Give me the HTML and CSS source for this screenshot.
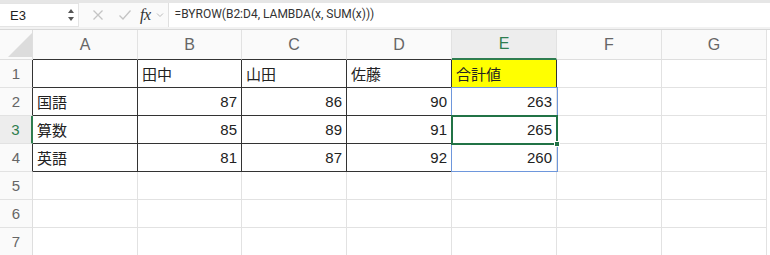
FILE: index.html
```html
<!DOCTYPE html>
<html lang="ja">
<head>
    <meta charset="UTF-8">
    <title>BYROW</title>
    <link rel="stylesheet" href="styles.css">
</head>
<body>
    <div class="formula-bar">
        <div class="name-box">
            <span>E3</span>
            <svg class="spin" width="8" height="14" viewBox="0 0 8 14">
                <polygon points="4,1 7,5 1,5" fill="#555"/>
                <polygon points="1,9 7,9 4,13" fill="#555"/>
            </svg>
        </div>
        <div class="tools">
            <svg width="12" height="12" viewBox="0 0 12 12"><path d="M1.5 1.5 L10.5 10.5 M10.5 1.5 L1.5 10.5" stroke="#c4c4c4" stroke-width="1.3" fill="none"/></svg>
            <svg width="14" height="12" viewBox="0 0 14 12"><path d="M1.5 6.5 L5 10 L12.5 1.5" stroke="#c4c4c4" stroke-width="1.3" fill="none"/></svg>
            <span class="fx">fx</span>
            <svg width="8" height="6" viewBox="0 0 8 6"><path d="M1 1.5 L4 4.5 L7 1.5" stroke="#bbb" stroke-width="1" fill="none"/></svg>
        </div>
        <div class="formula">=BYROW(B2:D4, LAMBDA(x, SUM(x)))</div>
    </div>

    <div class="sheet">
        <div class="corner">
            <svg width="33" height="29" viewBox="0 0 33 29"><polygon points="8,27 32,27 32,3" fill="#dcdcdc"/></svg>
        </div>
        <div class="col-head dark">A</div>
        <div class="col-head dark">B</div>
        <div class="col-head dark">C</div>
        <div class="col-head dark">D</div>
        <div class="col-head active">E</div>
        <div class="col-head">F</div>
        <div class="col-head">G</div>

        <div class="row-head edge">1</div>
        <div class="cell b"></div>
        <div class="cell b">田中</div>
        <div class="cell b">山田</div>
        <div class="cell b">佐藤</div>
        <div class="cell b total">合計値</div>
        <div class="cell"></div>
        <div class="cell"></div>

        <div class="row-head edge">2</div>
        <div class="cell b">国語</div>
        <div class="cell b num">87</div>
        <div class="cell b num">86</div>
        <div class="cell b num">90</div>
        <div class="cell num">263</div>
        <div class="cell"></div>
        <div class="cell"></div>

        <div class="row-head active">3</div>
        <div class="cell b">算数</div>
        <div class="cell b num">85</div>
        <div class="cell b num">89</div>
        <div class="cell b num">91</div>
        <div class="cell num">265</div>
        <div class="cell"></div>
        <div class="cell"></div>

        <div class="row-head edge">4</div>
        <div class="cell b">英語</div>
        <div class="cell b num">81</div>
        <div class="cell b num">87</div>
        <div class="cell b num">92</div>
        <div class="cell num">260</div>
        <div class="cell"></div>
        <div class="cell"></div>

        <div class="row-head">5</div>
        <div class="cell"></div><div class="cell"></div><div class="cell"></div><div class="cell"></div><div class="cell"></div><div class="cell"></div><div class="cell"></div>

        <div class="row-head">6</div>
        <div class="cell"></div><div class="cell"></div><div class="cell"></div><div class="cell"></div><div class="cell"></div><div class="cell"></div><div class="cell"></div>

        <div class="row-head">7</div>
        <div class="cell"></div><div class="cell"></div><div class="cell"></div><div class="cell"></div><div class="cell"></div><div class="cell"></div><div class="cell"></div>

        <!-- spill range and selected cell drawn over the grid -->
        <div class="spill"></div>
        <div class="selection"><span class="handle"></span></div>
    </div>
</body>
</html>
```

FILE: styles.css
```css
* {
    box-sizing: border-box;
}

body {
    margin: 0;
    width: 770px;
    height: 255px;
    overflow: hidden;
    background-color: white;
    font-family: "Liberation Sans", "Noto Sans CJK JP", sans-serif;
    color: #222;
}

.formula-bar {
    height: 30px;
    display: flex;
    align-items: center;
    background-color: #fafafa;
    border-top: 3px solid #e6e6e6;
    border-bottom: 1px solid #d8d8d8;
    box-shadow: 0 -2px 0 #f2f2f2 inset;
    padding-bottom: 2px;
}

.name-box {
    width: 79px;
    height: 24px;
    display: flex;
    align-items: center;
    justify-content: space-between;
    padding: 0 3px 0 10px;
    background-color: white;
    border: 1px solid #e4e4e4;
    border-left: none;
    font-size: 13px;
    color: #222;
}

.tools {
    display: flex;
    align-items: center;
    height: 24px;
    padding-left: 13px;
}

.tools svg:nth-child(1) {
    margin-right: 14px;
}

.tools svg:nth-child(2) {
    margin-right: 8px;
}

.fx {
    font-family: "Liberation Serif", serif;
    font-style: italic;
    font-size: 16px;
    color: #333;
    margin-right: 5px;
    letter-spacing: -0.5px;
}

.formula {
    flex-grow: 1;
    height: 24px;
    margin-left: 4px;
    padding-left: 6px;
    line-height: 23px;
    border-left: 1px solid #e0e0e0;
    background-color: white;
    font-family: Roboto, "Liberation Sans", sans-serif;
    font-size: 12px;
    color: #333;
}

.sheet {
    position: relative;
    display: grid;
    grid-template-columns: 33px 105px 104px 105px 105px 105px 105px 105px;
    grid-template-rows: 30px repeat(7, 28px);
}

.corner {
    background-color: #fafafa;
    border-right: 1px solid #dedede;
    border-bottom: 1px solid #dedede;
}

.corner svg {
    display: block;
}

.col-head {
    display: flex;
    align-items: center;
    justify-content: center;
    background-color: #fafafa;
    border-right: 1px solid #e2e2e2;
    border-bottom: 1px solid #dedede;
    font-size: 16px;
    color: #666;
}

.col-head.dark {
    border-bottom-color: #333;
}

.col-head.active {
    background-color: #ededed;
    color: #2e7d4f;
    border-bottom: 2px solid #2e7d4f;
}

.row-head {
    display: flex;
    align-items: center;
    justify-content: center;
    background-color: #fafafa;
    border-right: 1px solid #dedede;
    border-bottom: 1px solid #e2e2e2;
    font-size: 15px;
    color: #666;
}

.row-head.edge {
    border-right-color: #333;
}

.row-head.active {
    background-color: #ededed;
    color: #2e7d4f;
    border-right: 2px solid #2e7d4f;
}

.cell {
    display: flex;
    align-items: center;
    padding: 0 4px;
    border-right: 1px solid #e2e2e2;
    border-bottom: 1px solid #e2e2e2;
    font-size: 15px;
    color: #222;
    white-space: nowrap;
}

.cell.b {
    border-right-color: #333;
    border-bottom-color: #333;
}

.cell.num {
    justify-content: flex-end;
}

.cell.total {
    background-color: #ffff00;
    border-right-color: #333;
}

.spill {
    position: absolute;
    left: 451px;
    top: 57px;
    width: 107px;
    height: 85px;
    border: 1px solid #6e97dc;
    pointer-events: none;
}

.selection {
    position: absolute;
    left: 451px;
    top: 85px;
    width: 107px;
    height: 30px;
    border: 2px solid #217346;
    pointer-events: none;
}

.handle {
    position: absolute;
    right: -4px;
    bottom: -4px;
    width: 6px;
    height: 6px;
    background-color: #217346;
    border: 1px solid white;
}
```
